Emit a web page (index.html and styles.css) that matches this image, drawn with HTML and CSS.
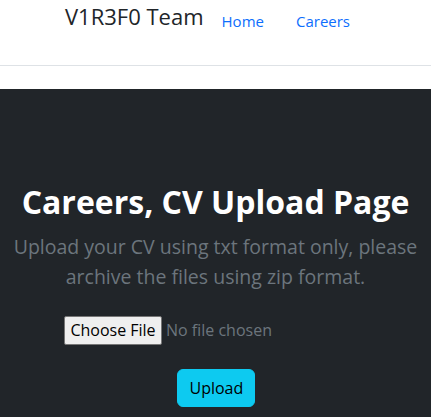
FILE: index.html
```html
<!DOCTYPE html>
<html lang="en">
<head>
<meta charset="utf-8">
<title>Careers</title>
<link rel="stylesheet" href="styles.css">
</head>
<body>
<header class="site-header">
  <a class="brand" href="#">V1R3F0 Team</a>
  <nav class="nav">
    <a class="nav-link" href="#">Home</a>
    <a class="nav-link" href="#">Careers</a>
  </nav>
</header>
<main class="hero">
  <h1 class="hero-title">Careers, CV Upload Page</h1>
  <p class="lead">Upload your CV using txt format only, please archive the files using zip format.</p>
  <form class="upload-form">
    <input class="file-input" type="file" name="file">
    <button class="btn-upload" type="button">Upload</button>
  </form>
</main>
</body>
</html>
```
FILE: styles.css
```css
* { box-sizing: border-box; }
html, body { margin: 0; padding: 0; }
body {
  font-family: "Open Sans", "Noto Sans", sans-serif;
  background: #fff;
  color: #212529;
  font-size: 16px;
  line-height: 1.5;
}
.site-header {
  display: flex;
  justify-content: center;
  align-items: flex-start;
  height: 66px;
  border-bottom: 1px solid #dee2e6;
  margin-bottom: 23px;
}
.brand {
  font-size: 22px;
  line-height: 33px;
  color: #212529;
  text-decoration: none;
  margin-right: 2px;
}
.nav { display: flex; }
.nav-link {
  display: block;
  padding: 9px 16px 8px;
  color: #0d6efd;
  text-decoration: none;
  font-size: 15px;
  line-height: 24px;
}
.hero {
  background: #212529;
  min-height: 340px;
  padding: 94px 8px 20px;
  text-align: center;
}
.hero-title {
  margin: 0;
  color: #fff;
  font-size: 32px;
  font-weight: 700;
  line-height: 38px;
}
.lead {
  margin: 11px 0 0;
  color: #6c757d;
  font-size: 19.5px;
  line-height: 30px;
}
.upload-form {
  display: flex;
  flex-direction: column;
  align-items: center;
  gap: 24px;
  margin-top: 24px;
}
.file-input {
  width: 303px;
  color: #6c757d;
  font-family: inherit;
  font-size: 16px;
}
.file-input::file-selector-button {
  font-family: inherit;
  font-size: 16px;
  line-height: 23px;
  width: 98px;
  color: #000;
  background: #efefef;
  border: 1px solid #767676;
  border-radius: 2px;
  padding: 2px 4px;
  margin-right: 4px;
}
.btn-upload {
  font-family: inherit;
  font-size: 16px;
  line-height: 24px;
  padding: 6px 12px;
  color: #000;
  background: #0dcaf0;
  border: 1px solid #0dcaf0;
  border-radius: 6px;
  width: 78px;
}
```
